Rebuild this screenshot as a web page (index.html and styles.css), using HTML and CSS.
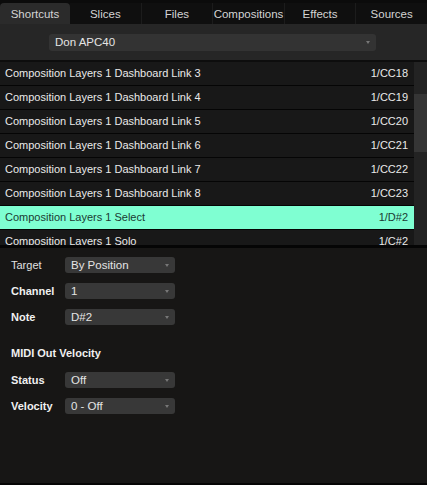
FILE: index.html
```html
<!DOCTYPE html>
<html lang="en">
<head>
  <meta charset="UTF-8">
  <title>Shortcuts</title>
  <link rel="stylesheet" href="styles.css">
</head>
<body>
  <div class="app">
    <div class="tabs">
      <div class="tab active">Shortcuts</div>
      <div class="tab">Slices</div>
      <div class="tab">Files</div>
      <div class="tab">Compositions</div>
      <div class="tab">Effects</div>
      <div class="tab">Sources</div>
    </div>

    <div class="toolbar">
      <div class="select device">Don APC40<span class="arrow"></span></div>
    </div>

    <div class="list-wrap">
      <div class="list">
        <div class="row"><span>Composition Layers 1 Dashboard Link 3</span><span>1/CC18</span></div>
        <div class="row"><span>Composition Layers 1 Dashboard Link 4</span><span>1/CC19</span></div>
        <div class="row"><span>Composition Layers 1 Dashboard Link 5</span><span>1/CC20</span></div>
        <div class="row"><span>Composition Layers 1 Dashboard Link 6</span><span>1/CC21</span></div>
        <div class="row"><span>Composition Layers 1 Dashboard Link 7</span><span>1/CC22</span></div>
        <div class="row"><span>Composition Layers 1 Dashboard Link 8</span><span>1/CC23</span></div>
        <div class="row selected"><span>Composition Layers 1 Select</span><span>1/D#2</span></div>
        <div class="row"><span>Composition Layers 1 Solo</span><span>1/C#2</span></div>
      </div>
      <div class="scrollbar"><div class="thumb"></div></div>
    </div>

    <div class="panel">
      <div class="field">
        <label>Target</label>
        <div class="select">By Position<span class="arrow"></span></div>
      </div>
      <div class="field">
        <label class="bold">Channel</label>
        <div class="select">1<span class="arrow"></span></div>
      </div>
      <div class="field">
        <label class="bold">Note</label>
        <div class="select">D#2<span class="arrow"></span></div>
      </div>

      <h4>MIDI Out Velocity</h4>

      <div class="field">
        <label class="bold">Status</label>
        <div class="select">Off<span class="arrow"></span></div>
      </div>
      <div class="field">
        <label class="bold">Velocity</label>
        <div class="select">0 - Off<span class="arrow"></span></div>
      </div>
    </div>
  </div>
</body>
</html>
```

FILE: styles.css
```css
body {
  margin: 0;
  background: #0c0c0c;
  font-family: "Liberation Sans", Arial, sans-serif;
  font-size: 11px;
  color: #e6e6e6;
}
.app {
  width: 427px;
  height: 485px;
  display: flex;
  flex-direction: column;
  overflow: hidden;
}
.tabs {
  display: flex;
  height: 24px;
  padding-top: 3px;
  box-sizing: border-box;
  background: #0b0b0b;
}
.tab {
  flex: 1;
  display: flex;
  align-items: center;
  justify-content: center;
  color: #d4d4d4;
  font-size: 11.5px;
  border-right: 1px solid #1c1c1c;
  background: #0f0f0f;
}
.tab.active {
  flex: 0 0 70px;
  background: #2b2b2b;
  border-radius: 4px 4px 0 0;
  border-right: none;
}
.tab:last-child {
  border-right: none;
}
.toolbar {
  height: 36px;
  background: #262626;
  display: flex;
  align-items: center;
  padding-left: 49px;
  border-bottom: 2px solid #0d0d0d;
}
.select {
  position: relative;
  height: 16px;
  width: 110px;
  box-sizing: border-box;
  padding-left: 6px;
  line-height: 16px;
  background: #383838;
  border-radius: 3px;
  color: #e4e4e4;
  font-size: 11.5px;
}
.select.device {
  width: 327px;
  height: 17px;
  line-height: 17px;
  background: #333;
}
.arrow {
  position: absolute;
  right: 6px;
  top: 7px;
  border-left: 2px solid transparent;
  border-right: 2px solid transparent;
  border-top: 3px solid #777;
}
.list-wrap {
  display: flex;
  height: 183px;
  border-bottom: 3px solid #050505;
}
.list {
  flex: 1;
  overflow: hidden;
}
.row {
  display: flex;
  justify-content: space-between;
  height: 24px;
  line-height: 23px;
  padding: 0 6px 0 5px;
  background: #181818;
  border-bottom: 1px solid #050505;
  box-sizing: border-box;
  color: #eaeaea;
  font-size: 11px;
}
.row.selected {
  background: #7fffd2;
  color: #1b3b32;
}
.scrollbar {
  width: 13px;
  background: #232323;
  padding-top: 32px;
}
.thumb {
  height: 58px;
  background: #353535;
}
.panel {
  flex: 1;
  background: #171615;
  padding: 4px 0 0 11px;
  border-bottom: 2px solid #050505;
}
.field {
  display: flex;
  align-items: center;
  height: 26px;
}
.field label {
  width: 54px;
  color: #e0e0e0;
}
.field label.bold,
h4 {
  font-weight: bold;
  color: #f0f0f0;
}
h4 {
  margin: 17px 0 7px;
  font-size: 11px;
  line-height: 13px;
}
```
